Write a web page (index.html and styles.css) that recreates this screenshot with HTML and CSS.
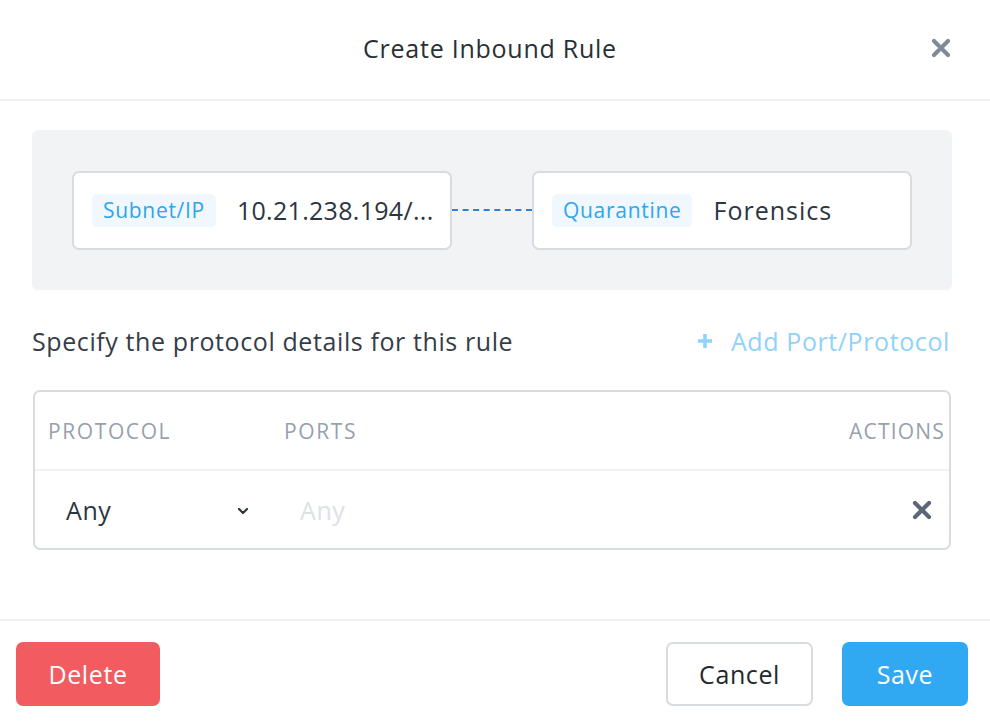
FILE: index.html
```html
<!DOCTYPE html>
<html>
<head>
<meta charset="utf-8">
<link rel="stylesheet" href="styles.css">
</head>
<body>
<div class="modal">
  <header class="head">
    <h1 class="title">Create Inbound Rule</h1>
    <span class="close">
      <svg width="20" height="20" viewBox="0 0 20 20"><path d="M3 3L17 17M17 3L3 17" stroke="#7f8b98" stroke-width="4.2" stroke-linecap="round"/></svg>
    </span>
  </header>
  <main class="body">
    <section class="panel">
      <div class="node">
        <span class="badge">Subnet/IP</span>
        <span class="value">10.21.238.194/...</span>
      </div>
      <div class="link"></div>
      <div class="node">
        <span class="badge">Quarantine</span>
        <span class="value value-name">Forensics</span>
      </div>
    </section>
    <div class="spec">
      <span class="spec-text">Specify the protocol details for this rule</span>
      <span class="add"><svg class="plus" width="16" height="16" viewBox="0 0 16 16"><path d="M8 1V15M1 8H15" stroke="#90d2f9" stroke-width="3.6"/></svg>Add Port/Protocol</span>
    </div>
    <div class="table">
      <div class="trow thead">
        <span class="c-proto">PROTOCOL</span>
        <span class="c-ports">PORTS</span>
        <span class="c-actions">ACTIONS</span>
      </div>
      <div class="trow tbody">
        <span class="c-proto select">Any
          <svg class="chev" width="12" height="8" viewBox="0 0 12 8"><path d="M2 2L6 6L10 2" stroke="#2c3540" stroke-width="2.2" fill="none" stroke-linecap="round" stroke-linejoin="round"/></svg>
        </span>
        <span class="c-ports placeholder">Any</span>
        <span class="c-actions">
          <svg width="20" height="20" viewBox="0 0 20 20"><path d="M3 3L17 17M17 3L3 17" stroke="#5b6776" stroke-width="4.2" stroke-linecap="round"/></svg>
        </span>
      </div>
    </div>
  </main>
  <footer class="foot">
    <button class="btn btn-delete">Delete</button>
    <div class="right">
      <button class="btn btn-cancel">Cancel</button>
      <button class="btn btn-save">Save</button>
    </div>
  </footer>
</div>
</body>
</html>
```
FILE: styles.css
```css
* { box-sizing: border-box; }
html, body { margin: 0; padding: 0; background: #fff; }
body { font-family: "Open Sans", "Lato", sans-serif; color: #2c3540; width: 990px; height: 724px; overflow: hidden; }
.modal { width: 990px; height: 724px; display: flex; flex-direction: column; }
.head { height: 101px; border-bottom: 2px solid #f1f2f4; display: flex; align-items: center; justify-content: center; position: relative; }
.title { margin: 0; font-weight: 400; font-size: 25px; color: #2a2f36; letter-spacing: 0.75px; padding-bottom: 4px; padding-right: 10px; }
.close { position: absolute; right: 39px; top: 38px; display: flex; }
.body { padding: 29px 38px 0 32px; height: 518px; }
.panel { background: #f2f3f5; border-radius: 6px; height: 160px; display: flex; align-items: center; padding: 0 40px; }
.node { width: 380px; height: 79px; background: #fff; border: 2px solid #d8dce1; border-radius: 7px; display: flex; align-items: center; padding-left: 18px; }
.badge { background: #f0f8fe; color: #2fa5ee; font-size: 21px; letter-spacing: 0.7px; padding: 0 11px; height: 33px; line-height: 33px; border-radius: 5px; }
.value { font-size: 25px; margin-left: 21px; color: #2c3540; letter-spacing: 0.3px; }
.value-name { letter-spacing: 1px; }
.link { width: 80px; border-top: 2px dashed #2d7fd8; margin-top: 0; }
.spec { display: flex; justify-content: space-between; align-items: center; margin-top: 36px; height: 30px; }
.spec-text { font-size: 25px; color: #343d48; letter-spacing: 0.6px; }
.add { font-size: 25px; color: #90d2f9; letter-spacing: 0.6px; display: flex; align-items: center; margin-right: 2px; }
.plus { margin-right: 18px; margin-top: -1px; }
.table { margin-top: 34px; border: 2px solid #d8dce1; border-radius: 7px; margin-left: 1px; width: 918px; }
.trow { display: flex; align-items: center; }
.thead { height: 79px; border-bottom: 2px solid #eff1f3; font-size: 21px; letter-spacing: 1.6px; color: #96a1ae; }
.tbody { height: 77px; }
.c-proto { width: 249px; padding-left: 13px; }
.c-ports { flex: 1; }
.c-actions { padding-right: 4px; letter-spacing: 1.2px; }
.tbody .c-actions { padding-right: 17px; display: flex; }
.select { font-size: 25px; letter-spacing: 0.6px; padding-left: 31px; padding-right: 35px; display: flex; align-items: center; justify-content: space-between; color: #2c3540; }
.tbody .c-ports { padding-left: 16px; }
.placeholder { font-size: 25px; letter-spacing: 0.6px; color: #dde1e6; }
.chev { margin-top: 2px; }
.foot { border-top: 2px solid #f1f2f4; height: 105px; display: flex; justify-content: space-between; align-items: flex-start; padding: 21px 22px 0 16px; }
.right { display: flex; gap: 29px; }
.btn { font-family: inherit; font-size: 25px; letter-spacing: 0.6px; height: 64px; border-radius: 7px; border: none; }
.btn-delete { background: #f25b5f; color: #fff; width: 144px; }
.btn-cancel { background: #fff; border: 2px solid #d8dce1; color: #23282e; width: 147px; }
.btn-save { background: #30a8f2; color: #fff; width: 126px; }
```
